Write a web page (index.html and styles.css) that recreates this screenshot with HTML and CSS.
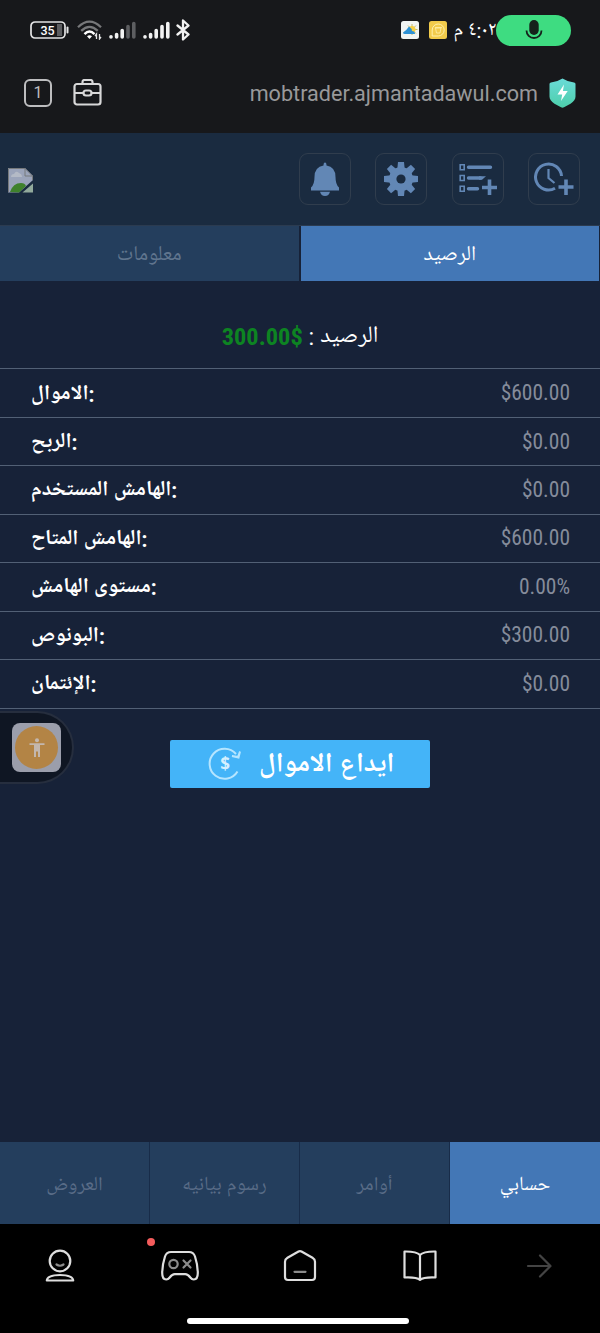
FILE: index.html
```
<!doctype html>
<html lang="ar">
<head>
    <meta charset="UTF-8">
    <title>حسابي</title>
    <link rel="stylesheet" href="styles.css">
</head>
<body>
    <div class="status">
        <div class="status-left">
            <svg class="battery" width="40" height="18" viewBox="0 0 40 18">
                <rect x="27" y="3" width="5" height="12" fill="#5d5e61"/>
                <rect x="1" y="1" width="34" height="16" rx="4" fill="none" stroke="#e4e4e5" stroke-width="1.7"/>
                <path d="M37.500 6.500v5" stroke="#e4e4e5" stroke-width="2" stroke-linecap="round"/>
                <text x="17.500" y="13.600" text-anchor="middle">35</text>
            </svg>
            <svg width="26" height="20" viewBox="0 0 26 20" fill="none">
                <path d="M1 7.200Q12.500-4 24 7.200M4.200 10.800Q12.500 3 20.800 10.800" stroke="#77787a" stroke-width="2.300"/>
                <path d="M7.500 14.200Q12.500 9 17.500 14.200" stroke="#fff" stroke-width="2.500"/>
                <path d="M12.500 19l-2.500-2.800q2.500-1.800 5 0z" fill="#fff"/>
                <path d="M19.500 19v-5l-1.500 2M22.500 14v5l1.500-2" stroke="#e4e4e5" stroke-width="1.300"/>
            </svg>
            <svg width="27" height="18" viewBox="0 0 27 18" stroke-width="3.600" stroke-linecap="round">
                <path d="M2 16v-.2M7.600 16v-2.500M13.200 16V9.500" stroke="#f2f2f2"/>
                <path d="M19 16V5.500M24.800 16V2.500" stroke="#5d5e61"/>
            </svg>
            <svg width="27" height="18" viewBox="0 0 27 18" stroke-width="3.600" stroke-linecap="round">
                <path d="M2 16v-.2M7.600 16v-2.500M13.200 16V9.500M19 16V5.500M24.800 16V2.500" stroke="#f2f2f2"/>
            </svg>
            <svg width="14" height="22" viewBox="0 0 14 22" fill="none" stroke="#f2f2f2" stroke-width="2.300" stroke-linejoin="round" stroke-linecap="round">
                <path d="M1.500 6.500L12.500 15.500 7 20.500v-19L12.500 6.500 1.500 15.500"/>
            </svg>
        </div>
        <div class="status-right">
            <svg width="18" height="18" viewBox="0 0 18 18">
                <rect width="18" height="18" rx="2.500" fill="#f1f4f2"/>
                <path d="M11 3v11M6 8.500h10.500M7 4.500l8 8M15 4.500l-5 5" stroke="#b9ad45" stroke-width=".8"/>
                <circle cx="11" cy="8.500" r="3.500" fill="#f4cf46"/>
                <path d="M2 11.500q3-1.500 6-6 3 2 3 4.500 3 0 3 3H4q-2 0-2-1.500z" fill="#2d91d4"/>
            </svg>
            <svg width="18" height="18" viewBox="0 0 18 18" fill="none" stroke="#fff0ac">
                <rect width="18" height="18" rx="2.500" fill="#f2cb4b" stroke="none"/>
                <path d="M3.200 15V9a6 6 0 1 1 6 6z"/>
                <path d="M6.500 7h5.500l-1 5H7.500zM6 6.500h7" stroke-width=".8"/>
            </svg>
            <span class="clock" dir="rtl">٤:٠٢ م</span>
            <div class="mic">
                <svg width="18" height="20" viewBox="0 0 18 20">
                    <rect x="4.300" y="0" width="9.400" height="15" rx="4.700" fill="#15221b"/>
                    <path d="M1.500 10.500a7.500 7.500 0 0 0 15 0" fill="none" stroke="#15221b" stroke-width="1.800"/>
                </svg>
            </div>
        </div>
    </div>

    <div class="address">
        <div class="windows">1</div>
        <svg width="30" height="28" viewBox="0 0 30 28" fill="none" stroke="#d8d8d9" stroke-width="2.200" stroke-linejoin="round">
            <rect x="1.500" y="5" width="26" height="20.500" rx="2.500"/>
            <path d="M9.500 4.500V3Q9.500 1 11.500 1h6Q19.500 1 19.500 3v1.500M2 14h8.500M18.500 14H27"/>
            <rect x="10.500" y="11.500" width="8" height="5" rx="2.500"/>
        </svg>
        <span class="url">mobtrader.ajmantadawul.com</span>
        <svg width="27" height="30" viewBox="0 0 27 30">
            <defs>
                <linearGradient id="shield" x1="0" y1="0" x2="0" y2="1">
                    <stop offset="0" stop-color="#6adbd8"/>
                    <stop offset="1" stop-color="#4dceaa"/>
                </linearGradient>
            </defs>
            <path d="M13.500.5q5.500 3.500 11.500 4 1.500 0 1.500 1.500v12.500q0 4-5 7.200l-6.500 3.600q-1.500.8-3 0l-6.500-3.600Q.5 22.500.5 18.500V6q0-1.500 1.500-1.500 6-.5 11.500-4z" fill="url(#shield)"/>
            <path d="M15 6.500L8.500 16.500h4.700L12 23l6.700-10h-4.800z" fill="#fff"/>
        </svg>
    </div>

    <header class="header">
        <svg width="25" height="25" viewBox="0 0 25 25" class="broken">
            <path d="M0 0h17l8 8v4L11 24.500H0z" fill="#9ba4ba"/>
            <path d="M3 9q0-3 3-3 2-4 5-1 3 1 3 4z" fill="#b4bac6"/>
            <path d="M2 24q3-9 11-9 4 0 5 3l-7 6.500z" fill="#3f812c"/>
            <path d="M25 15.500v9H14.500z" fill="#92aa9c"/>
            <path d="M.5 24V.5H17l7.500 7.500H17V.5M24.500 8v4" fill="none" stroke="#777a7c"/>
        </svg>
        <div class="tools">
            <div class="tool">
                <svg width="28" height="35" viewBox="0 0 28 35" fill="#6287b5">
                    <path d="M14 .5q1.500 0 1.500 3 9 1.500 9 11.500 0 7.500 3.500 10.500v3H0v-3q3.500-3 3.500-10.500 0-10 9-11.500 0-3 1.500-3z"/>
                    <path d="M9 29.800h10q-1 4.200-5 4.200t-5-4.200z"/>
                </svg>
            </div>
            <div class="tool">
                <svg width="34" height="34" viewBox="-17 -17 34 34">
                    <g fill="#6287b5">
                        <path id="cog" d="M-3.700-10l.7-7h6l.7 7v20l-.7 7h-6l-.7-7z"/>
                        <use href="#cog" transform="rotate(45)"/>
                        <use href="#cog" transform="rotate(90)"/>
                        <use href="#cog" transform="rotate(135)"/>
                        <circle r="12"/>
                    </g>
                    <circle r="4.600" fill="#1a2b40"/>
                </svg>
            </div>
            <div class="tool">
                <svg width="38" height="34" viewBox="0 0 38 34" fill="none" stroke="#6287b5">
                    <path d="M1.200 2.700h4v5h-4zM1.200 13.500h4v5h-4zM1.200 24.300h4v5h-4z" stroke-width="1.600"/>
                    <path d="M9.500 5.200h22M9.500 16h12M9.500 26.800h9" stroke-width="3.400" stroke-linecap="round"/>
                    <path d="M20 14.300h7l-4 3.400h-3z" fill="#6287b5" stroke="none"/>
                    <path d="M23 25.500h15M30.500 17.500V33" stroke-width="3.600"/>
                </svg>
            </div>
            <div class="tool">
                <svg width="40" height="34" viewBox="0 0 40 34" fill="none" stroke="#6287b5">
                    <path d="M27.500 14A13 13 0 1 0 21 26.300" stroke-width="3"/>
                    <path d="M14.500 7v9l6 5" stroke-width="2.200"/>
                    <path d="M24.500 25h15M32 17.500V33" stroke-width="3.600"/>
                </svg>
            </div>
        </div>
    </header>

    <nav class="tabs">
        <div class="tab"><span>معلومات</span></div>
        <div class="tab active"><span>الرصيد</span></div>
    </nav>

    <main class="account">
        <div class="balance" dir="rtl"><span>الرصيد :</span> <b dir="ltr">300.00$</b></div>
        <div class="row"><span class="name">الاموال:</span><span class="value">$600.00</span></div>
        <div class="row"><span class="name">الربح:</span><span class="value">$0.00</span></div>
        <div class="row"><span class="name">الهامش المستخدم:</span><span class="value">$0.00</span></div>
        <div class="row"><span class="name">الهامش المتاح:</span><span class="value">$600.00</span></div>
        <div class="row"><span class="name">مستوى الهامش:</span><span class="value">0.00%</span></div>
        <div class="row"><span class="name">البونوص:</span><span class="value">$300.00</span></div>
        <div class="row last"><span class="name">الإئتمان:</span><span class="value">$0.00</span></div>
        <div class="deposit">
            <svg width="34" height="34" viewBox="0 0 34 34" fill="none" stroke="#b5e5ff" stroke-width="2">
                <path d="M29.500 24.500A15 15 0 1 1 28 7"/>
                <path d="M32 4.500l-1.500 6-6.500-1.500 6 1z" fill="#b5e5ff" stroke-width="2"/>
                <text x="17" y="23" text-anchor="middle">$</text>
            </svg>
            <span>ايداع الاموال</span>
        </div>
        <div class="access">
            <div class="access-box">
                <div class="access-circle">
                    <svg width="16" height="20" viewBox="0 0 16 20" fill="#c3b7ae">
                        <circle cx="8" cy="2.300" r="2"/>
                        <path d="M.5 5.300h15v1.800h-4.500V19H9v-5.500H7V19H5V7.100H.5z"/>
                    </svg>
                </div>
            </div>
        </div>
    </main>

    <nav class="menu">
        <div class="item"><span>العروض</span></div>
        <div class="item"><span>رسوم بيانيه</span></div>
        <div class="item"><span>أوامر</span></div>
        <div class="item active"><span>حسابي</span></div>
    </nav>

    <footer class="browser">
        <div class="buttons">
            <svg width="38" height="34" viewBox="0 0 38 34">
                <circle cx="19" cy="12" r="10.300"/>
                <path d="M5.800 31.500q.5-5.500 13.200-5.500t13.200 5.500z"/>
                <path d="M15.500 15.500q3.500 2.500 7 0" stroke="#8b8b8b"/>
            </svg>
            <div class="games">
                <svg width="38" height="34" viewBox="0 0 38 34">
                    <path d="M10 3h18q4.500 0 6 4.500Q36.800 16 36.800 24q0 6.500-4 6.500-2 0-3.500-2-2.500-3.300-5-3.300H13.700q-2.500 0-5 3.300-1.500 2-3.500 2-4 0-4-6.500Q1.200 16 4 7.500 5.500 3 10 3z"/>
                    <circle cx="12.500" cy="15" r="4.200" stroke="#8b8b8b"/>
                    <path d="M22.500 11.500l7 7M29.500 11.500l-7 7" stroke="#8b8b8b"/>
                </svg>
                <i class="dot"></i>
            </div>
            <svg width="38" height="34" viewBox="0 0 38 34">
                <path d="M20.500 2.500l11 6.300q2.500 1.500 2.500 4V28q0 3-3 3H7q-3 0-3-3V12.800q0-2.500 2.500-4l11-6.300q1.500-.8 3 0z"/>
                <path d="M13.500 22.800h11" stroke="#8b8b8b"/>
            </svg>
            <svg width="38" height="34" viewBox="0 0 38 34">
                <path d="M19 6Q15.500 2.300 3.500 2.500v26q12-.5 15.500 2.300 3.500-2.800 15.500-2.300v-26Q22.500 2.300 19 6zM19 6v24.500"/>
            </svg>
            <svg width="38" height="34" viewBox="0 0 38 34" class="forward">
                <path d="M8 17h22M20 6.500L30.500 17 20 27.500"/>
            </svg>
        </div>
        <div class="handle"></div>
    </footer>
</body>
</html>
```
FILE: styles.css
```
*{
    box-sizing: border-box;
    margin: 0;
    padding: 0;
}
body{
    width: 600px;
    height: 1333px;
    display: flex;
    flex-direction: column;
    overflow: hidden;
    background: #172238;
    color: #fff;
    font-family: Roboto, "Noto Naskh Arabic UI", "Noto Naskh Arabic", "Noto Sans", sans-serif;
}
svg{
    display: block;
    flex: none;
}
span{
    white-space: nowrap;
}

/* status bar */
.status{
    height: 60px;
    display: flex;
    justify-content: space-between;
    align-items: center;
    padding: 0 29px 0 30px;
    background: #17181b;
}
.status-left{
    display: flex;
    align-items: center;
    gap: 6.5px;
}
.battery text{
    font: 500 12.5px Roboto, sans-serif;
    fill: #fff;
}
.status-right{
    display: flex;
    align-items: center;
    gap: 10px;
}
.clock{
    width: 44px;
    margin: 0 -10px 0 -5px;
    padding-top: 2px;
    font-size: 20px;
    line-height: 30px;
}
.mic{
    width: 75px;
    height: 31px;
    display: flex;
    justify-content: center;
    align-items: center;
    border-radius: 16px;
    background: #3edc81;
}

/* address bar */
.address{
    height: 73px;
    display: flex;
    align-items: center;
    padding: 0 24px 7px 24px;
    background: #17181b;
}
.windows{
    width: 28px;
    height: 28px;
    margin-right: 21px;
    border: 2px solid #bdbdbf;
    border-radius: 6px;
    color: #bdbdbf;
    font-size: 16px;
    line-height: 24px;
    text-align: center;
}
.url{
    margin: 0 11px 0 auto;
    color: #98989a;
    font-size: 21.6px;
}

/* header */
.header{
    height: 92px;
    display: flex;
    justify-content: space-between;
    align-items: center;
    padding: 0 20px 0 8px;
    background: #1a2b40;
}
.broken{
    margin-top: 3px;
}
.tools{
    display: flex;
    gap: 24.3px;
}
.tool{
    width: 52px;
    height: 52px;
    display: flex;
    justify-content: center;
    align-items: center;
    border: 1px solid #303d4d;
    border-radius: 9px;
}
.tabs{
    height: 56px;
    display: flex;
    gap: 2px;
    padding-right: 1px;
    border-top: 1px solid #2b3b50;
}
.tab{
    flex: 1;
    display: flex;
    justify-content: center;
    align-items: center;
    padding-top: 1px;
    background: #243e5d;
    color: #60758e;
    font-size: 21.2px;
}
.tab.active,
.item.active{
    background: #4377b6;
    color: #fff;
}

/* account */
.account{
    flex: 1;
    position: relative;
}
.balance{
    height: 87.4px;
    padding-top: 26px;
    font-size: 23.5px;
    line-height: 60px;
    text-align: center;
}
.balance b{
    color: #0d8422;
    font-family: "Roboto Condensed", Roboto, sans-serif;
    font-size: 24.4px;
}
.row{
    height: 48.43px;
    display: flex;
    justify-content: space-between;
    align-items: center;
    padding: 0 30px 0 31px;
    border-top: 1px solid #526075;
}
.row.last{
    height: 49.6px;
    border-bottom: 1px solid #526075;
}
.name{
    padding-top: 3px;
    font-size: 21.4px;
    font-weight: bold;
    line-height: 30px;
}
.value{
    padding-bottom: 1px;
    color: #858c9b;
    font-family: "Roboto Condensed", Roboto, sans-serif;
    font-size: 21.5px;
}
.deposit{
    width: 260px;
    height: 48px;
    display: flex;
    align-items: center;
    gap: 17px;
    margin: 31px auto 0;
    padding-left: 38px;
    border-radius: 2px;
    background: #44b4f8;
    font-size: 27.4px;
    font-weight: bold;
    line-height: 44px;
}
.deposit span{
    padding-top: 4px;
}
.deposit text{
    font: bold 17px "Open Sans", sans-serif;
    fill: #d5f0ff;
    stroke: none;
}

/* floating accessibility button */
.access{
    position: absolute;
    left: 0;
    top: 430px;
    width: 74px;
    height: 73px;
    display: flex;
    align-items: center;
    padding-left: 12px;
    border: 2px solid #262e3e;
    border-left: 0;
    border-radius: 0 37px 37px 0;
    background: #0f1623;
}
.access-box{
    width: 49px;
    height: 49px;
    padding: 3px;
    border-radius: 8px;
    background: #9b9eab;
}
.access-circle{
    width: 43px;
    height: 43px;
    display: flex;
    justify-content: center;
    align-items: center;
    border-radius: 50%;
    background: #b38445;
}

/* bottom menu */
.menu{
    height: 82px;
    display: flex;
}
.item{
    width: 150px;
    display: flex;
    justify-content: center;
    align-items: center;
    padding-top: 4px;
    border-right: 1px solid #182c49;
    background: #243e5d;
    color: #596c87;
    font-size: 20px;
}
.item.active{
    border-right: 0;
}
.browser{
    height: 109px;
    display: flex;
    flex-direction: column;
    align-items: center;
    background: #000;
}
.buttons{
    width: 600px;
    display: flex;
    justify-content: space-around;
    padding-top: 25px;
    padding-right: .6px;
    fill: none;
    stroke: #dedede;
    stroke-width: 2.2;
    stroke-linecap: round;
    stroke-linejoin: round;
}
.games{
    position: relative;
}
.dot{
    position: absolute;
    left: -14px;
    top: -11px;
    width: 8px;
    height: 8px;
    border-radius: 50%;
    background: #f45c5c;
}
.forward{
    stroke: #444;
}
.handle{
    width: 222px;
    height: 6px;
    margin: 35px 4px 0 0;
    border-radius: 3px;
    background: #fff;
}
```
